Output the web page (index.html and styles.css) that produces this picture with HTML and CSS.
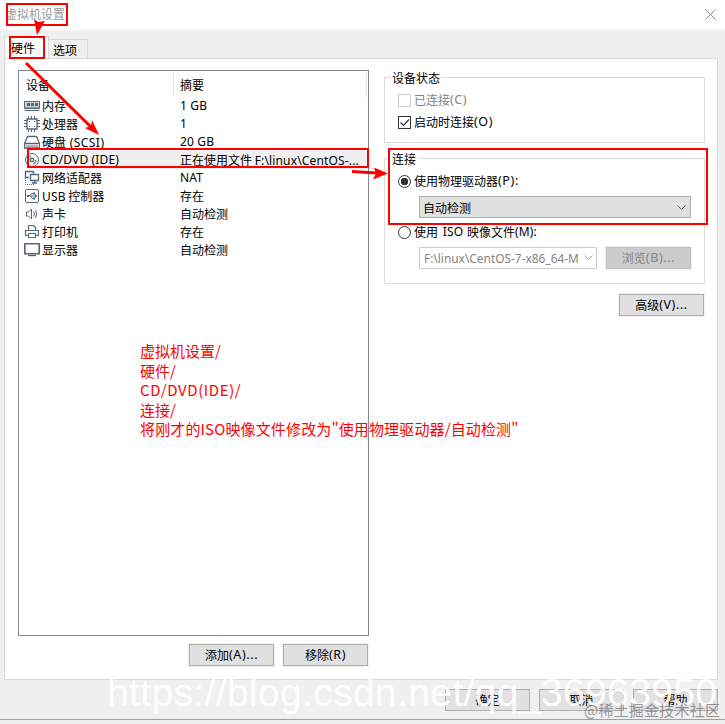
FILE: index.html
```html
<!DOCTYPE html>
<html lang="zh-CN">
<head>
<meta charset="utf-8">
<title>虚拟机设置</title>
<link rel="stylesheet" href="styles.css">
</head>
<body>
<div class="window">
  <header class="titlebar"><span class="title">虚拟机设置</span>
    <svg class="close" width="11" height="11" viewBox="0 0 11 11"><path d="M.5 .5l10 10M10.500 .5l-10 10"/></svg>
  </header>
  <nav class="tabs"><div class="tab active">硬件</div><div class="tab">选项</div></nav>
  <main class="panel">
    <section class="left">
      <div class="list">
        <div class="row head"><span class="name">设备</span><span class="val">摘要</span></div>
        <div class="row"><svg class="icon" viewBox="0 0 16 16"><path fill="#c9d3da" d="M.5 3.500h15v7H.5z"/><path d="M.5 12.500h15M1 10h14"/><path class="fill" d="M3 5h3v3H3zM7 5h3v3H7zM11 5h3v3h-3z"/></svg><span class="name">内存</span><span class="val en">1 GB</span></div>
        <div class="row"><svg class="icon" viewBox="0 0 16 16"><path stroke-width="1.400" d="M3 3h10v10H3z"/><path d="M4.500 0v3M7.500 0v3M10.500 0v3M4.500 13v3M7.500 13v3M10.500 13v3M0 4.500h3M0 7.500h3M0 10.500h3M13 4.500h3M13 7.500h3M13 10.500h3M5 5.500h1M10 5.500h1M5 10.500h1M10 10.500h1"/></svg><span class="name">处理器</span><span class="val en">1</span></div>
        <div class="row"><svg class="icon" viewBox="0 0 16 16"><path stroke-width="1.300" d="M3.500 2.500h9l3 7v4.500H.5V9.500zM.5 9.500h15"/><path d="M2 12h12"/></svg><span class="name">硬盘 <i class="en scsi">(SCSI)</i></span><span class="val en">20 GB</span></div>
        <div class="row selected"><svg class="icon" viewBox="0 0 16 16"><circle cx="8" cy="8" r="6.500"/><circle cx="8" cy="8" r="1.700" stroke-width="1.400"/><path stroke="#7e9cb5" stroke-width="1.500" d="M4 8a4 4 0 0 1 3-4M12 8a4 4 0 0 1-3 4"/></svg><span class="name en">CD/DVD (IDE)</span><span class="val">正在使用文件 <i class="en path">F:\linux\CentOS-...</i></span></div>
        <div class="row"><svg class="icon" viewBox="0 0 16 16"><path stroke-width="1.300" d="M5 7.500H1.500v-6h8V4M6.500 4.500h8v6h-8zM10.500 10.500v2M8 13h5"/><path stroke-dasharray="1 1" d="M1.500 8v6.500h9"/></svg><span class="name">网络适配器</span><span class="val en">NAT</span></div>
        <div class="row"><svg class="icon" viewBox="0 0 16 16"><rect x="1.500" y="1.500" width="13" height="13" rx="1.500"/><path d="M4 8h8M5.500 8l2-2.500h2M6.500 8l2 2.500h2"/><path class="fill" d="M11 6l2.500 2-2.500 2zM3 7h2v2H3zM9 4.500h2v2H9zM9 9.500h2v2H9z"/></svg><span class="name"><i class="en">USB</i> 控制器</span><span class="val">存在</span></div>
        <div class="row"><svg class="icon" viewBox="0 0 16 16"><path d="M2.500 6h2L7.500 3v10L4.500 10h-2zM9.500 5.500q2 2.500 0 5M11.500 4q2.500 4 0 8"/></svg><span class="name">声卡</span><span class="val">自动检测</span></div>
        <div class="row"><svg class="icon" viewBox="0 0 16 16"><path stroke-width="1.200" d="M4.500 6V1.500h5l2 2V6M4 11.500H1.500v-5h13v5H12M4.500 9.500h7v4h-7z"/></svg><span class="name">打印机</span><span class="val">存在</span></div>
        <div class="row"><svg class="icon" viewBox="0 0 16 16"><path stroke-width="1.600" d="M.8 1.800h14.400v10H.8z"/><path stroke-width="1.300" d="M4 13.500h8"/></svg><span class="name">显示器</span><span class="val">自动检测</span></div>
      </div>
      <div class="actions"><div class="button">添加<i class="en">(A)...</i></div><div class="button">移除<i class="en">(R)</i></div></div>
    </section>
    <section class="right">
      <fieldset class="status"><legend>设备状态</legend>
        <div class="choice disabled"><span class="check"></span>已连接<i class="en">(C)</i></div>
        <div class="choice"><span class="check"><svg viewBox="0 0 11 11"><path d="M1.500 5.500l3 3 5.500-6"/></svg></span>启动时连接<i class="en">(O)</i></div>
      </fieldset>
      <fieldset class="connection"><legend>连接</legend>
        <div class="choice"><span class="radio on"></span>使用物理驱动器<i class="en">(P):</i></div>
        <div class="select"><span>自动检测</span><svg class="chevron" viewBox="0 0 9 6"><path d="M.5 .5l4 4 4-4"/></svg></div>
        <div class="choice iso"><span class="radio"></span>使用&nbsp;<i class="en isoword">ISO</i>&nbsp;映像文件<i class="en mkey">(M):</i></div>
        <div class="file"><div class="combo"><span class="en">F:\linux\CentOS-7-x86_64-M</span><svg class="chevron" viewBox="0 0 9 6"><path d="M.5 .5l4 4 4-4"/></svg></div><div class="button off">浏览<i class="en">(B)...</i></div></div>
      </fieldset>
      <div class="button advanced">高级<i class="en">(V)...</i></div>
    </section>
  </main>
  <footer class="footer"><div class="button">确定</div><div class="button">取消</div><div class="button">帮助</div></footer>
</div>
<div class="note">虚拟机设置/<br>硬件/<br><span class="l3">CD/DVD(IDE)/</span><br>连接/<br><span class="l5">将刚才的ISO映像文件修改为"使用物理驱动器/自动检测"</span></div>
<svg class="overlay" width="725" height="724" viewBox="0 0 725 724">
  <g class="boxes"><path d="M7 4h60v21H7zM10 37h34v21H10zM28 149h340v18H28zM389 149h318v75H389z"/></g>
  <path class="arrow" d="M26 63L91 127M352 171.500l25 1.500"/>
  <path class="head-fill" d="M34 19l4 3 7-1-8 14zM99 135l-14-7 6-2 1-6zM388 173.500l-15 6 3-6-2-6z"/>
  <text class="url" x="107" y="706" textLength="610" lengthAdjust="spacing">https://blog.csdn.net/qq_36963950</text>
  <text class="credit" x="584" y="716" textLength="136" lengthAdjust="spacing">@稀土掘金技术社区</text>
</svg>
</body>
</html>
```
FILE: styles.css
```css
* { box-sizing: border-box; }
body { margin: 0; background: #f0f0f0; font: 12px/18px "Noto Sans CJK SC", sans-serif; color: #000; }
i { font-style: normal; }
.en { font-family: "Noto Sans", sans-serif; font-size: 12px; letter-spacing: .15px; }
.choice .en, .button .en { font-size: 12.500px; letter-spacing: .6px; }
.choice .isoword, .choice .mkey { font-size: 12px; letter-spacing: .15px; }
.scsi { margin-left: 1px; letter-spacing: .45px; }
.window { width: 725px; height: 720px; border-bottom: 1px solid #a0a0a0; overflow: hidden; }
.titlebar { height: 30px; background: #fff; display: flex; justify-content: space-between; align-items: flex-start; padding: 5px 9px 0 5px; }
.title { color: #999; }
.close { margin-top: 4px; fill: none; stroke: #888; }
.tabs { height: 28px; display: flex; align-items: flex-end; padding-left: 4px; }
.tab { width: 39px; height: 19px; border: 1px solid #d9d9d9; border-left: 0; border-bottom: 0; padding-left: 4px; line-height: 20px; }
.active { width: 45px; height: 22px; border-left: 1px solid #d9d9d9; background: #fff; padding-left: 6px; line-height: 21px; }
.panel { width: 714px; height: 622px; margin-left: 4px; background: #fff; border: 1px solid #d9d9d9; padding: 11px 12px 0 13px; display: flex; justify-content: space-between; }
.left { width: 351px; }
.list { height: 566px; border: 1px solid #828790; padding-top: 2px; }
.row { height: 18px; display: flex; align-items: center; padding-left: 5px; line-height: 18px; }
.row .icon { width: 16px; height: 16px; margin-right: 2px; fill: none; stroke: #53687a; stroke-width: 1; flex: none; }
.row .icon .fill { fill: #53687a; stroke: none; }
.row .name { width: 138px; flex: none; white-space: nowrap; }
.row .val { flex: 1; white-space: nowrap; }
.row.head { height: 24px; padding-left: 7px; border-right: 1px solid #e5e5e5; margin-right: 1px; }
.head .name { width: 148px; height: 24px; line-height: 24px; border-right: 1px solid #e5e5e5; }
.head .val { padding-left: 6px; }
.selected { background: linear-gradient(to right, #fff 21px, #f0f0f0 21px); }
.button { width: 85px; height: 22px; border: 1px solid #adadad; background: #e1e1e1; display: flex; justify-content: center; align-items: center; box-shadow: 0 0 0 1px #f2f2f2; flex: none; }
.actions { display: flex; justify-content: flex-end; gap: 9px; margin: 8px 1px 0 0; }
.right { width: 321px; padding-top: 7px; }
fieldset { margin: 0; padding: 0 0 0 13px; border: 1px solid #dcdcdc; position: relative; }
legend { position: absolute; left: 5px; top: -9px; padding: 0 2px; background: #fff; line-height: 18px; }
.status { height: 66px; padding-top: 13px; }
.connection { height: 126px; margin-top: 15px; padding-top: 13px; }
.choice { height: 18px; display: flex; align-items: center; margin-bottom: 4px; }
.disabled { color: #838383; }
.check, .radio { width: 13px; height: 13px; border: 1px solid #333; margin-right: 3px; flex: none; }
.check svg { display: block; width: 11px; height: 11px; fill: none; stroke: #333; stroke-width: 1.200; }
.disabled .check { border-color: #ccc; }
.radio { border-radius: 50%; }
.on { background: radial-gradient(circle, #333 0 3.500px, #fff 4px); }
.isoword { margin: 0 1px 0 2px; }
.select { width: 272px; height: 22px; margin: 6px 0 5px 21px; border: 1px solid #adadad; background: #e1e1e1; display: flex; align-items: center; justify-content: space-between; padding: 1px 4px 0 3px; }
.chevron { width: 9px; height: 6px; fill: none; stroke: #606060; flex: none; }
.file { display: flex; margin-left: 21px; margin-top: 6px; gap: 9px; }
.combo { width: 178px; height: 22px; border: 1px solid #ccc; color: #838383; display: flex; align-items: center; justify-content: space-between; padding: 0 3px 0 4px; white-space: nowrap; }
.combo .en { width: 155px; overflow: hidden; letter-spacing: 0; font-size: 11.900px; }
.combo .chevron { stroke: #aaa; }
.off { background: #ccc; border-color: #bfbfbf; color: #838383; }
.advanced { margin: 10px 1px 0 auto; }
.footer { display: flex; justify-content: flex-end; gap: 9px; padding: 9px 7px 0 0; }
.note { position: absolute; left: 140px; top: 341px; font: 15px/19.500px "Noto Sans CJK SC", sans-serif; color: #f00; white-space: nowrap; }
.l3 { letter-spacing: .6px; }
.l5 { letter-spacing: .14px; }
.overlay { position: absolute; left: 0; top: 0; }
.boxes { fill: none; stroke: #f00; stroke-width: 2; }
.arrow { fill: none; stroke: #f00; stroke-width: 3; }
.head-fill { fill: #f00; }
.url { font: 39px "Liberation Sans", sans-serif; fill: #fff; fill-opacity: .92; }
.credit { font: 15px "Noto Sans CJK SC", sans-serif; fill: #777; fill-opacity: .75; }
```
